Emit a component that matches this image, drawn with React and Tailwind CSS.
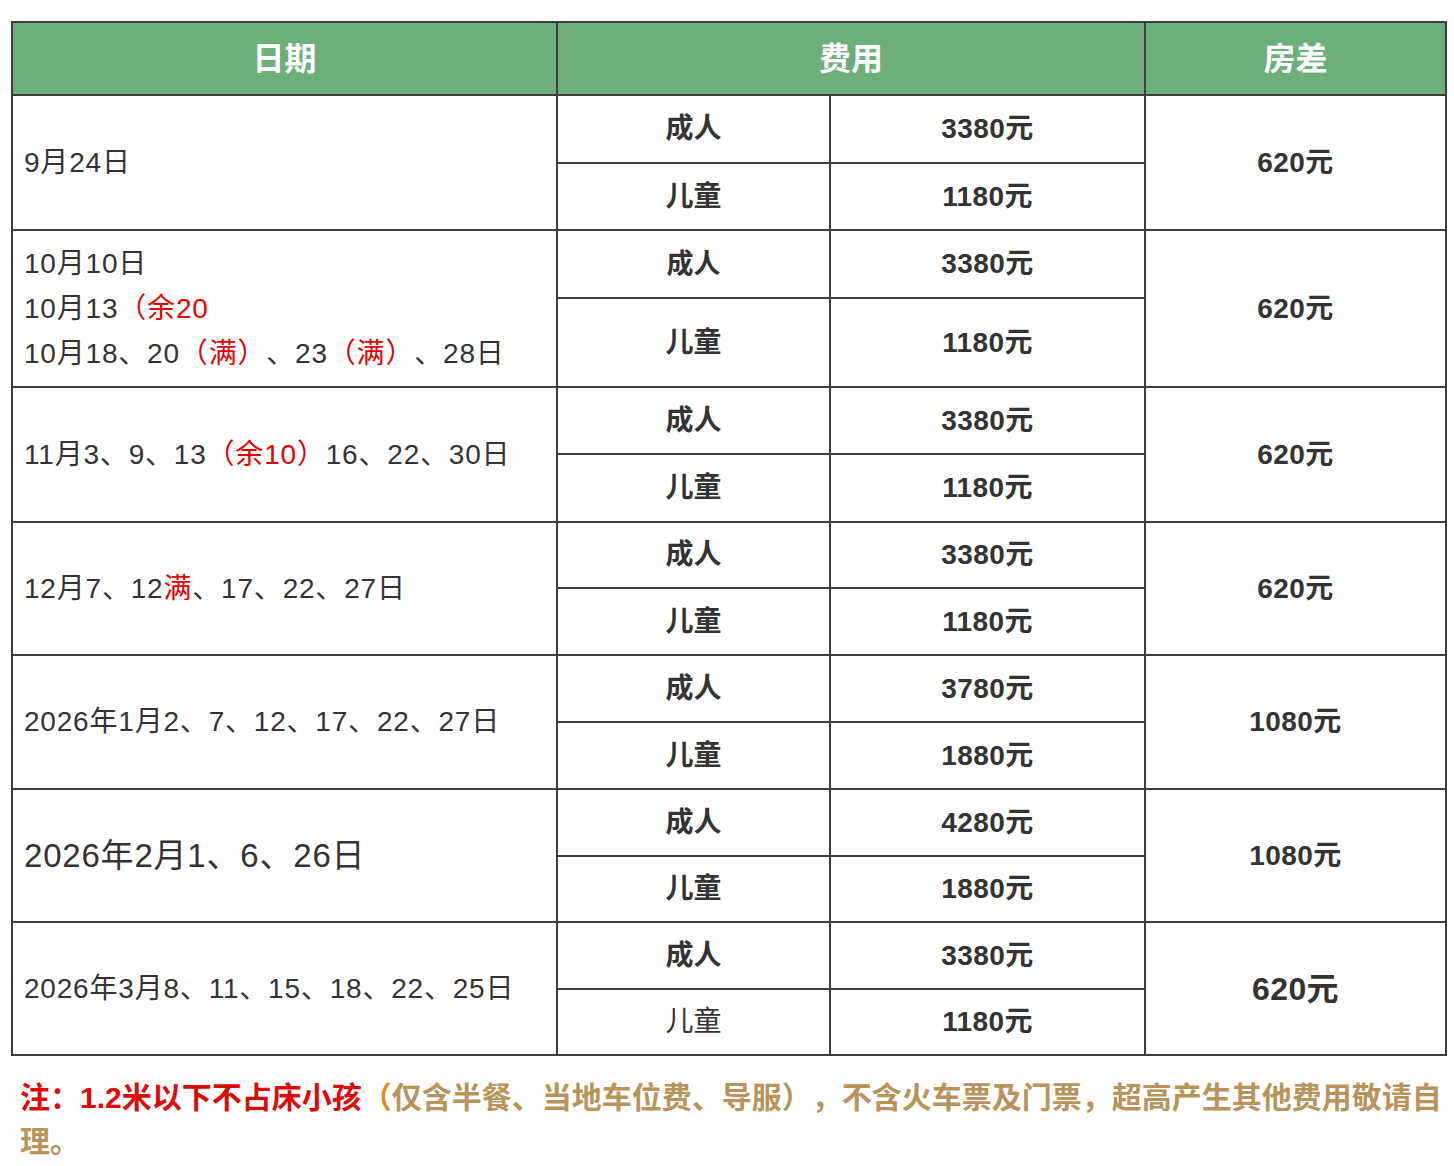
import React from "react";

const FONT = { fontFamily: '"Liberation Sans", "Noto Sans CJK SC", sans-serif' };

const R = ({ children }) => <span className="text-[#e60000]">{children}</span>;

const groups = [
  {
    date: <div>9月24日</div>,
    adult: "3380元",
    child: "1180元",
    diff: "620元",
  },
  {
    date: (
      <div className="leading-[45px]">
        <div>10月10日</div>
        <div>
          10月13<R>（余20</R>
        </div>
        <div>
          10月18、20<R>（满）</R>、23<R>（满）</R>、28日
        </div>
      </div>
    ),
    adult: "3380元",
    child: "1180元",
    diff: "620元",
    adultSmall: true,
  },
  {
    date: (
      <div>
        11月3、9、13<R>（余10）</R>16、22、30日
      </div>
    ),
    adult: "3380元",
    child: "1180元",
    diff: "620元",
  },
  {
    date: (
      <div>
        12月7、12<R>满</R>、17、22、27日
      </div>
    ),
    adult: "3380元",
    child: "1180元",
    diff: "620元",
  },
  {
    date: <div>2026年1月2、7、12、17、22、27日</div>,
    adult: "3780元",
    child: "1880元",
    diff: "1080元",
  },
  {
    date: <div className="text-[33px]">2026年2月1、6、26日</div>,
    adult: "4280元",
    child: "1880元",
    diff: "1080元",
  },
  {
    date: <div>2026年3月8、11、15、18、22、25日</div>,
    adult: "3380元",
    child: "1180元",
    diff: "620元",
    childNormal: true,
    diffBig: true,
  },
];

export default function App() {
  return (
    <div className="bg-white w-[1454px] min-h-[1166px] text-[#333333] [text-spacing-trim:space-all]" style={FONT}>
      <div className="pt-[21px] pl-[11px]">
        <div className="grid w-[1436px] grid-cols-[543px_271px_313px_299px] grid-rows-[71px_66px_65px_66px_87px_65px_66px_64px_65px_65px_65px_65px_64px_65px_64px] gap-[2px] p-[2px] bg-[#3d3d3d]">
          <div className="bg-[#6daf79] flex items-center justify-center text-white font-bold text-[32px]">日期</div>
          <div className="col-span-2 bg-[#6daf79] flex items-center justify-center text-white font-bold text-[32px]">费用</div>
          <div className="bg-[#6daf79] flex items-center justify-center text-white font-bold text-[32px]">房差</div>
          {groups.map((g, i) => (
            <React.Fragment key={i}>
              <div className="row-span-2 bg-white flex items-center pl-[11px] text-[28px] tracking-[0.8px]">{g.date}</div>
              <div className={`bg-white flex items-center justify-center font-bold ${g.adultSmall ? "text-[27px]" : "text-[28px]"}`}>成人</div>
              <div className="bg-white flex items-center justify-center font-bold text-[28px] tracking-[0.4px]">{g.adult}</div>
              <div className={`row-span-2 bg-white flex items-center justify-center font-bold tracking-[0.4px] ${g.diffBig ? "text-[32px]" : "text-[28px]"}`}>{g.diff}</div>
              <div className={`bg-white flex items-center justify-center text-[28px] ${g.childNormal ? "font-normal" : "font-bold"}`}>儿童</div>
              <div className="bg-white flex items-center justify-center font-bold text-[28px] tracking-[0.4px]">{g.child}</div>
            </React.Fragment>
          ))}
        </div>
      </div>
      <div className="mt-[20px] ml-[20px] w-[1428px] text-[30px] leading-[44px] font-bold text-[#b8945a]">
        <span className="text-[#dd0a0a]">注：1.2米以下不占床小孩</span>
        <span className="text-[#e08a1a]">（</span>仅含半餐、当地车位费、导服），不含火车票及门票，超高产生其他费用敬请自理。
      </div>
    </div>
  );
}
